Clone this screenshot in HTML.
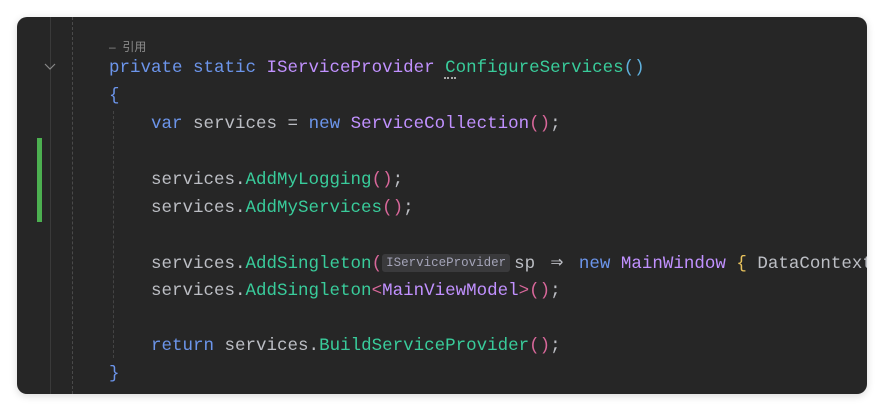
<!DOCTYPE html>
<html><head><style>
body{margin:0;background:#fff;width:884px;height:410px;overflow:hidden;position:relative}
.card{position:absolute;left:17px;top:17px;width:850px;height:377px;background:#262626;border-radius:10px;overflow:hidden;box-shadow:0 2px 8px rgba(0,0,0,.15)}
.l{position:absolute;left:92px;white-space:pre;font-family:"Liberation Mono",monospace;font-size:17.5px;color:#bcbec4;line-height:20px}
.k{color:#6c95eb}.t{color:#c191ff}.m{color:#39cc9b}.p{color:#d8679a}.b{color:#5fb0dd}.y{color:#e8c25c}
.hint{font-size:12.5px;color:#a4a4b8;background:#3a3a3c;border-radius:3px;padding:2px 4px;vertical-align:2px}
.vl{position:absolute;top:0;bottom:0;width:0}
</style></head><body>
<div class="card">
<div class="vl" style="left:33px;border-left:1px solid #3a3a3a"></div>
<div class="vl" style="left:55px;border-left:1px dashed #4a4a4a"></div>
<div class="vl" style="left:96px;top:94px;bottom:36px;border-left:1px dashed #444"></div>
<div style="position:absolute;left:20px;top:121px;width:5px;height:84px;background:#4caf50"></div>
<svg style="position:absolute;left:27px;top:46px" width="12" height="8"><path d="M1 1l5 5 5-5" stroke="#888" fill="none" stroke-width="1.2"/></svg>
<div style="position:absolute;left:427px;top:60px;width:12px;border-top:2px dotted #aaa"></div>
<div class="l" style="top:20px;font-size:12px;color:#8a8a8a;font-family:'Liberation Sans','Noto Sans CJK SC',sans-serif">–  引用</div>
<div class="l" style="top:41px"><span class="k">private static</span> <span class="t">IServiceProvider</span> <span class="m">ConfigureServices</span><span class="b">()</span></div>
<div class="l" style="top:69px"><span class="k">{</span></div>
<div class="l" style="top:97px">    <span class="k">var</span> services = <span class="k">new</span> <span class="t">ServiceCollection</span><span class="p">()</span>;</div>
<div class="l" style="top:153px">    services.<span class="m">AddMyLogging</span><span class="p">()</span>;</div>
<div class="l" style="top:181px">    services.<span class="m">AddMyServices</span><span class="p">()</span>;</div>
<div class="l" style="top:236px">    services.<span class="m">AddSingleton</span><span class="p">(</span><span class="hint">IServiceProvider</span><span style="margin-left:4px">sp</span> <span style="font-size:21px;line-height:1;margin:0 5px">⇒</span> <span class="k">new</span> <span class="t">MainWindow</span> <span class="y">{</span> DataContext</div>
<div class="l" style="top:264px">    services.<span class="m">AddSingleton</span><span class="p">&lt;</span><span class="t">MainViewModel</span><span class="p">&gt;()</span>;</div>
<div class="l" style="top:319px">    <span class="k">return</span> services.<span class="m">BuildServiceProvider</span><span class="p">()</span>;</div>
<div class="l" style="top:347px"><span class="k">}</span></div>
</div>
</body></html>
